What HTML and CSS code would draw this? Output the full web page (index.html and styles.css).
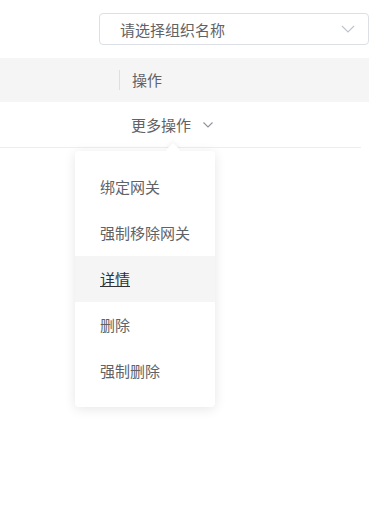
FILE: index.html
```html
<!DOCTYPE html>
<html lang="zh-CN">
<head>
    <meta charset="UTF-8">
    <title>组织网关</title>
    <link rel="stylesheet" href="styles.css">
</head>
<body>
<div class="toolbar">
    <div class="select">
        <span class="select-text">请选择组织名称</span>
        <svg class="select-arrow" width="14" height="8" viewBox="0 0 14 8">
            <path d="M1 1 L7 7 L13 1" fill="none" stroke="#c0c4cc" stroke-width="1.2"/>
        </svg>
    </div>
</div>

<div class="table">
    <div class="thead">
        <div class="cell cell-first"></div>
        <div class="cell cell-op">操作</div>
    </div>
    <div class="trow">
        <div class="cell cell-first"></div>
        <div class="cell cell-op">
            <span class="more">更多操作
                <svg class="more-arrow" width="10" height="6" viewBox="0 0 10 6">
                    <path d="M0.5 0.5 L5 5 L9.5 0.5" fill="none" stroke="#909399" stroke-width="1.1"/>
                </svg>
            </span>
        </div>
    </div>
</div>

<ul class="dropdown">
    <li>绑定网关</li>
    <li>强制移除网关</li>
    <li class="hover">详情</li>
    <li>删除</li>
    <li>强制删除</li>
</ul>
</body>
</html>
```

FILE: styles.css
```css
body {
    margin: 0;
    font-family: "Noto Sans CJK SC", "Noto Sans", sans-serif;
    font-size: 15px;
    color: #606266;
    background: #fff;
}

.toolbar {
    padding: 13px 0 13px 99px;
}

.select {
    width: 270px;
    height: 32px;
    box-sizing: border-box;
    border: 1px solid #dcdfe6;
    border-radius: 4px;
    display: flex;
    align-items: center;
    justify-content: space-between;
    padding: 0 13px 0 20px;
}

.select-text {
    color: #606266;
}

.table {
    width: 369px;
}

.thead {
    display: flex;
    height: 44px;
    background: #f5f5f5;
    align-items: center;
}

.trow {
    display: flex;
    height: 45px;
    align-items: center;
    border-bottom: 1px solid #ebeef5;
    width: 361px;
}

.cell-first {
    width: 119px;
    flex: none;
}

.thead .cell-op {
    border-left: 1px solid #dcdfe6;
    height: 20px;
    line-height: 20px;
    padding-left: 12px;
}

.trow .cell-op {
    padding-left: 12px;
}

.more {
    display: flex;
    align-items: center;
}

.more-arrow {
    margin-left: 12px;
}

.dropdown {
    position: absolute;
    left: 75px;
    top: 151px;
    width: 140px;
    margin: 0;
    padding: 13px 0;
    list-style: none;
    background: #fff;
    border-radius: 4px;
    box-shadow: 0 2px 12px rgba(0, 0, 0, 0.1);
}

.dropdown::before {
    content: "";
    position: absolute;
    top: -6px;
    left: 93px;
    width: 10px;
    height: 10px;
    background: #fff;
    transform: rotate(45deg);
    box-shadow: -2px -2px 4px rgba(0, 0, 0, 0.04);
}

.dropdown li {
    position: relative;
    height: 46px;
    line-height: 46px;
    padding-left: 25px;
    color: #606266;
}

.dropdown li.hover {
    background: #f5f5f5;
    color: #303133;
    text-decoration: underline;
}
```
